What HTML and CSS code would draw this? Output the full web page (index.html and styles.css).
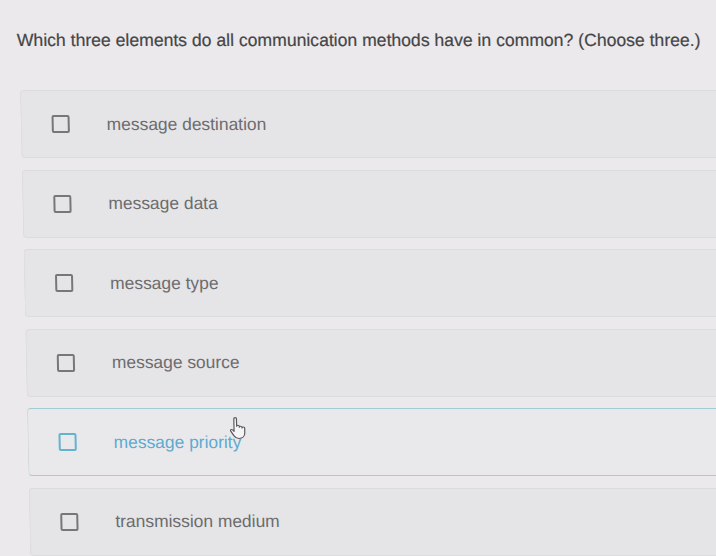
FILE: index.html
```html
<!DOCTYPE html>
<html>
<head>
<meta charset="utf-8">
<link rel="stylesheet" href="styles.css">
</head>
<body>
<div class="page">
  <h1 class="question">Which three elements do all communication methods have in common? (Choose three.)</h1>
  <ul class="options">
    <li class="option"><span class="box"></span><span class="label">message destination</span></li>
    <li class="option"><span class="box"></span><span class="label">message data</span></li>
    <li class="option"><span class="box"></span><span class="label">message type</span></li>
    <li class="option"><span class="box"></span><span class="label">message source</span></li>
    <li class="option hover"><span class="box"></span><span class="label">message priority<svg class="cursor" width="20" height="22" viewBox="0 0 15 19" preserveAspectRatio="none"><path d="M3.5 1.5c0-1.3 2-1.3 2 0V8c0-1.2 2-1.2 2 0v.8c0-1.2 2-1.2 2 0v.8c0-1.2 2-1.2 2 0v4.2c0 2.8-1.8 4.7-4.5 4.7H7c-1.8 0-2.8-.9-3.6-2.2L1 12.2c-.6-1 .5-1.9 1.4-1.1l1.1 1.3z" fill="#f5f5f7" stroke="#5a5a5c" stroke-width="0.9" stroke-linejoin="round"/></svg></span></li>
    <li class="option"><span class="box"></span><span class="label">transmission medium</span></li>
  </ul>
</div>
</body>
</html>
```
FILE: styles.css
```css
html, body {
  margin: 0;
  padding: 0;
  background: #ebe9eb;
  overflow: hidden;
}
body {
  width: 716px;
  height: 556px;
  font-family: "Liberation Sans", Arial, sans-serif;
}
.page {
  transform: skewX(1.25deg);
  transform-origin: 0 0;
  padding: 30px 0 0 16px;
}
.question {
  margin: 0;
  font-size: 17.6px;
  font-weight: normal;
  color: #454547;
  line-height: 20px;
  white-space: nowrap;
  -webkit-text-stroke: 0.2px #454547;
}
.options {
  list-style: none;
  margin: 40px 0 0 2px;
  padding: 0;
  display: flex;
  flex-direction: column;
  gap: 11.5px;
}
.option {
  height: 66px;
  background: #e5e4e7;
  border: 1px solid #dcdbde;
  border-right: none;
  border-radius: 4px 0 0 4px;
  display: flex;
  align-items: center;
  padding-left: 30px;
}
.box {
  width: 14px;
  height: 14px;
  border: 2px solid #77777a;
  border-radius: 2px;
  flex: none;
}
.label {
  margin-left: 37px;
  font-size: 17.4px;
  color: #6c6c6e;
  position: relative;
}
.option.hover {
  background: #e9e9ec;
  border-color: #9fcdd6;
  border-left-color: #d4d6da;
}
.option.hover .box {
  border-color: #61b3cf;
}
.option.hover .label {
  color: #5eaad0;
}
.cursor {
  position: absolute;
  left: 116px;
  top: -15px;
}
```
